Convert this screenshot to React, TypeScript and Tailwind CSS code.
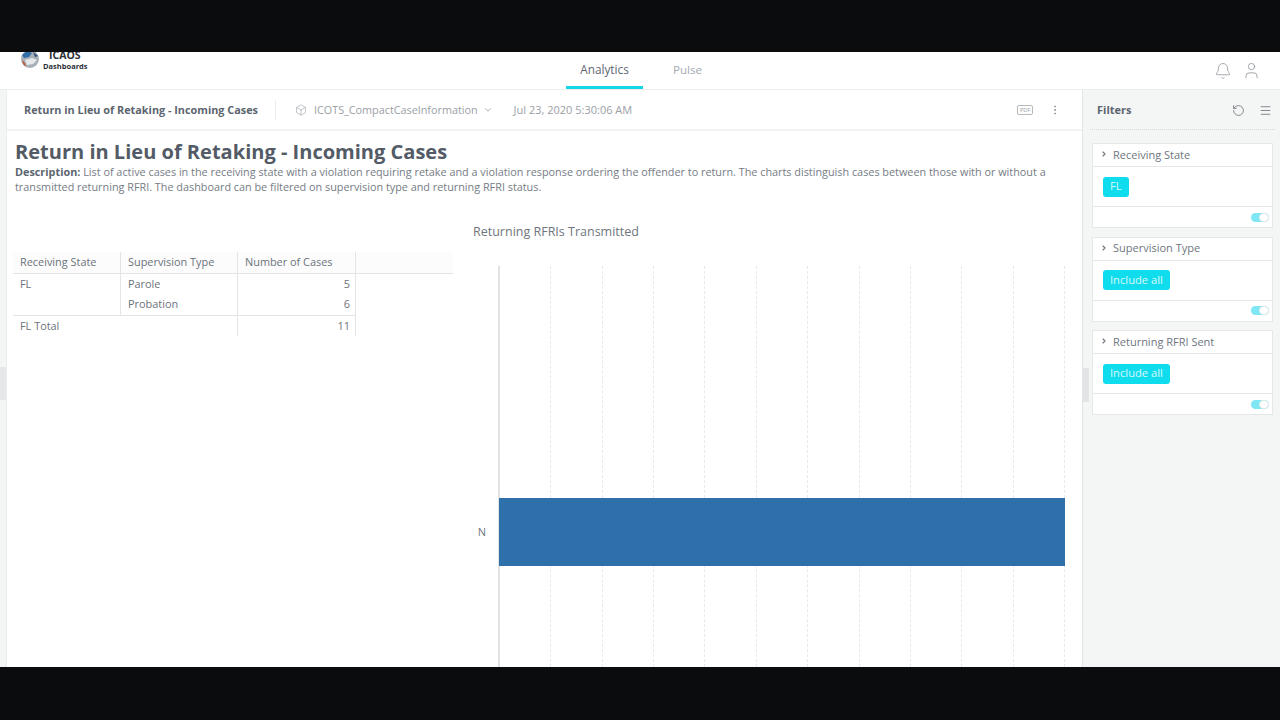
import { Bell, Box, ChevronDown, ChevronRight, Menu, MoreVertical, RotateCcw, User } from "lucide-react";

const font = "font-['Open_Sans',sans-serif]";

function FilterCard({ title, chip }: { title: string; chip: string }) {
  return (
    <div className="bg-white border border-[#e6e7e8] mb-[8.5px]">
      <div className="h-[23px] flex items-center pl-[7px] border-b border-[#e6e7e8] text-[11px] text-[#6f7680]">
        <ChevronRight size={8} strokeWidth={3.5} className="text-[#6f7680] mr-[5px] -mt-[2px]" />
        <span>{title}</span>
      </div>
      <div className="h-[40px] flex items-center pl-[10px] border-b border-[#e6e7e8]">
        <span className="h-[20px] px-[7px] flex items-center rounded-[3px] bg-[#0fdcec] text-[#d9f9fc] text-[11.2px]">{chip}</span>
      </div>
      <div className="h-[20px] flex items-center justify-end pr-[3px]">
        <span className="w-[18px] h-[9px] rounded-full bg-[#7fe7f4] flex justify-end">
          <span className="w-[10px] h-[9px] rounded-full bg-white border border-[#e6e7e8]" />
        </span>
      </div>
    </div>
  );
}

function Grid() {
  const cols = [0, 1, 2, 3, 4, 5, 6, 7, 8, 9, 10];
  return (
    <div className="absolute inset-0 flex border-l-2 border-[#e2e3e4]">
      {cols.map((c) => (
        <div key={c} className="flex-1 border-r border-dashed border-[#e8e9ea]" />
      ))}
    </div>
  );
}

export default function App() {
  return (
    <div className={`w-[1280px] h-[720px] overflow-hidden bg-[#0b0c0e] flex flex-col ${font}`}>
      <div className="h-[52px] shrink-0" />

      <div className="h-[38px] shrink-0 bg-white border-b border-[#eceded] flex items-start relative overflow-hidden">
        <div className="w-[566px] shrink-0 flex items-start pl-[21px] -mt-[1px]">
          <svg width="18" height="20" viewBox="0 0 18 20" className="mr-[4px]">
            <circle cx="9" cy="8" r="9" fill="#a9b1b8" />
            <path d="M1 4 L6 0 L11 2 L8 6 L3 7 Z" fill="#2f6ea9" />
            <path d="M4 9 L11 7 L16 9 L12 13 L6 14 Z" fill="#e6e8ea" />
            <path d="M12 1 L17 5 L14 6 Z" fill="#2f4f74" />
            <path d="M1 9 L4 12 L5 16 L2 13 Z" fill="#c25a3a" />
          </svg>
          <div className="flex flex-col leading-none">
            <span className="text-[10.5px] font-bold text-[#2b2f36] leading-[9px] pl-[6px]">ICAOS</span>
            <span className="text-[7.5px] font-bold text-[#2b2f36] leading-[10px] mt-[1px]">Dashboards</span>
          </div>
        </div>
        <div className="w-[77px] shrink-0 h-[37px] border-b-[3px] border-[#14d6e6] flex items-center justify-center text-[11.8px] text-[#5f6670] pt-[2px]">
          Analytics
        </div>
        <div className="ml-[30px] h-[37px] flex items-center text-[11.6px] text-[#a4a9af] pb-[1px]">Pulse</div>
        <div className="ml-auto mr-[19px] h-[37px] flex items-center gap-[10px] text-[#8b9096]">
          <Bell size={18} strokeWidth={1} />
          <User size={19} strokeWidth={1} />
        </div>
      </div>

      <div className="flex-1 min-h-0 flex">
        <div className="w-[6px] shrink-0 bg-[#f4f5f5] flex items-center">
          <div className="w-[6px] h-[33px] bg-[#e6e7e8] mt-[10px]" />
        </div>

        <div className="flex-1 min-w-0 bg-white flex flex-col border-l border-[#eceded]">
          <div className="h-[41px] shrink-0 flex items-center border-b-2 border-[#f1f2f2] pl-[17px] pr-[21px] pt-[1px]">
            <span className="text-[10.85px] font-bold text-[#5c6570] w-[251px] shrink-0 whitespace-nowrap">Return in Lieu of Retaking - Incoming Cases</span>
            <span className="h-[20px] border-l border-[#eceded] mr-[19px]" />
            <Box size={12} strokeWidth={1.2} className="text-[#9aa0a6] mr-[7px]" />
            <span className="text-[10.8px] text-[#9aa0a6] whitespace-nowrap">ICOTS_CompactCaseInformation</span>
            <ChevronDown size={10} className="text-[#9aa0a6] ml-[5px]" />
            <span className="text-[11px] text-[#9aa0a6] ml-[21px] whitespace-nowrap">Jul 23, 2020 5:30:06 AM</span>
            <span className="ml-auto w-[16px] h-[10px] border border-[#b5b9bd] rounded-[2px] text-[5.5px] leading-[8px] text-center text-[#9aa0a6]">PDF</span>
            <MoreVertical size={12} className="text-[#8b9096] ml-[16px]" />
          </div>

          <div className="pl-[8px] pr-[30px] pt-[9px] shrink-0">
            <h1 className="text-[20.05px] leading-[24px] font-bold text-[#535b66]">Return in Lieu of Retaking - Incoming Cases</h1>
            <p className="text-[10.83px] leading-[15px] text-[#757c85]">
              <b className="font-bold text-[#5c6570]">Description:</b> List of active cases in the receiving state with a violation requiring retake and a violation response ordering the offender to return. The charts distinguish cases between those with or without a transmitted returning RFRI. The dashboard can be filtered on supervision type and returning RFRI status.
            </p>
          </div>

          <div className="flex-1 min-h-0 flex pt-[29px]">
            <div className="w-[446px] shrink-0 pl-[6px] pt-[29px] text-[10.9px] text-[#6b727b]">
              <div className="flex h-[22px] border-b border-[#e3e4e5] bg-[#fcfcfc]">
                <div className="w-[108px] pl-[7px] flex items-center border-r border-[#e3e4e5]">Receiving State</div>
                <div className="w-[117px] pl-[7px] flex items-center border-r border-[#e3e4e5]">Supervision Type</div>
                <div className="w-[118px] pl-[7px] flex items-center border-r border-[#e3e4e5]">Number of Cases</div>
              </div>
              <div className="flex w-[343px] border-b border-[#e3e4e5]">
                <div className="w-[108px] pl-[7px] pt-[2px] h-[41px] border-r border-[#e3e4e5]">FL</div>
                <div className="w-[117px] border-r border-[#e3e4e5]">
                  <div className="h-[20px] pl-[7px] flex items-center">Parole</div>
                  <div className="h-[20px] pl-[7px] flex items-center">Probation</div>
                </div>
                <div className="w-[118px] border-r border-[#e3e4e5]">
                  <div className="h-[20px] pr-[5px] flex items-center justify-end">5</div>
                  <div className="h-[20px] pr-[5px] flex items-center justify-end">6</div>
                </div>
              </div>
              <div className="flex w-[343px] h-[20px]">
                <div className="w-[225px] pl-[7px] flex items-center border-r border-[#e3e4e5]">FL Total</div>
                <div className="w-[118px] pr-[5px] flex items-center justify-end border-r border-[#e3e4e5]">11</div>
              </div>
            </div>

            <div className="flex-1 min-w-0 flex flex-col">
              <div className="text-[12.5px] leading-[17px] text-[#6f7680] pl-[20px]">Returning RFRIs Transmitted</div>
              <div className="flex-1 min-h-0 flex mt-[26px]">
                <div className="w-[45px] shrink-0 flex flex-col">
                  <div className="h-[232px]" />
                  <div className="h-[68px] flex items-center justify-end pr-[12px] text-[11px] text-[#6f7680]">N</div>
                </div>
                <div className="w-[567px] relative flex flex-col">
                  <Grid />
                  <div className="h-[232px]" />
                  <div className="h-[68px] ml-[1px] bg-[#2f70ab] relative" />
                </div>
              </div>
            </div>
          </div>
        </div>

        <div className="w-[198px] shrink-0 bg-[#f4f5f5] border-l border-[#e3e4e5] relative flex flex-col pl-[9px] pr-[7px]">
          <div className="absolute left-0 top-[278px] w-[6px] h-[34px] bg-[#e3e4e5]" />
          <div className="h-[40px] shrink-0 flex items-center border-b border-dotted border-[#d5d7d9] -mx-[2px] text-[#6b727b] mb-[13px] pl-[7px] pt-[1px]">
            <span className="text-[11px] font-bold text-[#5c6570]">Filters</span>
            <RotateCcw size={13} className="ml-auto" strokeWidth={1.5} />
            <Menu size={13} className="ml-[14px] mr-[3px]" strokeWidth={1.5} />
          </div>
          <FilterCard title="Receiving State" chip="FL" />
          <FilterCard title="Supervision Type" chip="Include all" />
          <FilterCard title="Returning RFRI Sent" chip="Include all" />
        </div>
      </div>

      <div className="h-[53px] shrink-0" />
    </div>
  );
}
